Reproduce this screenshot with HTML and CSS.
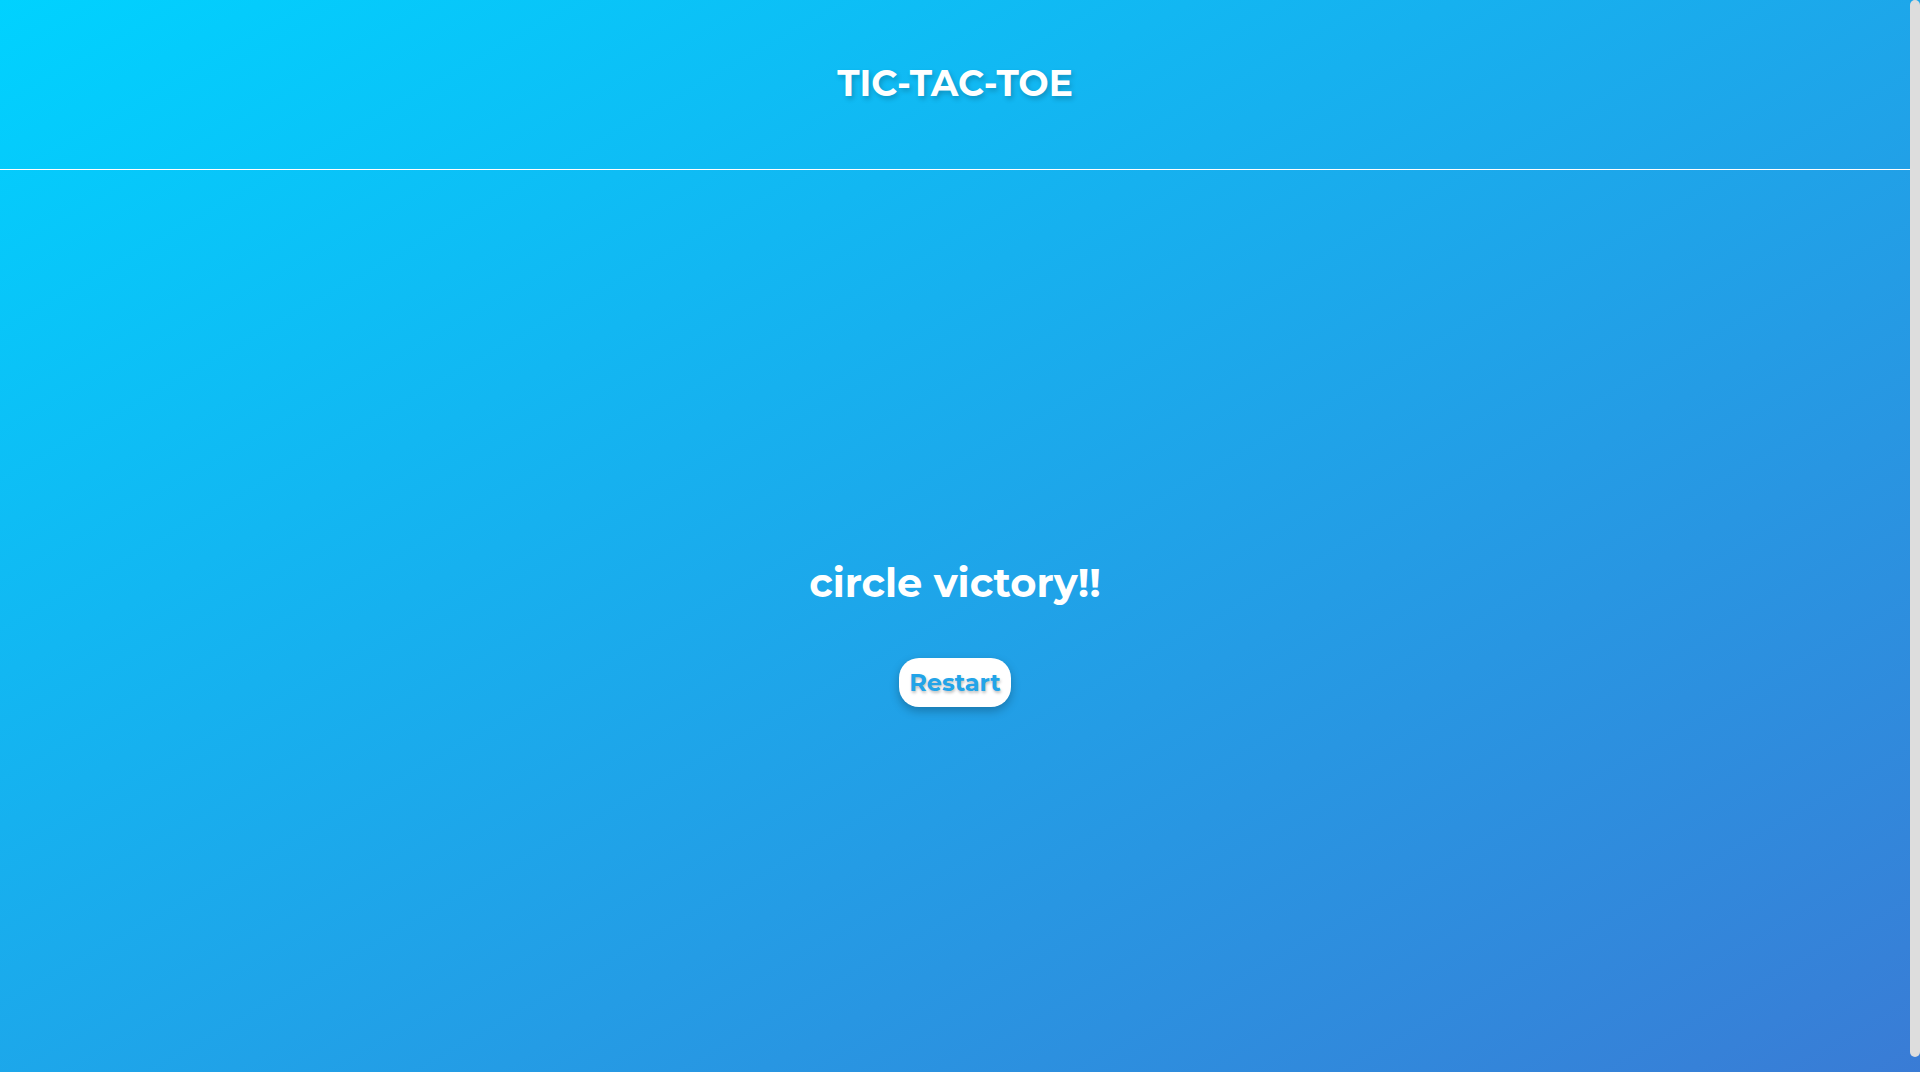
FILE: index.html
```html
<!DOCTYPE html>
<html lang="en">
<head>
<meta charset="utf-8">
<title>Tic-Tac-Toe</title>
<link rel="stylesheet" href="styles.css">
</head>
<body>
  <header class="header">
    <h1 class="title">TIC-TAC-TOE</h1>
  </header>
  <main class="main">
    <div class="result">
      <h2 class="message">circle victory!!</h2>
      <button class="restart" type="button">Restart</button>
    </div>
  </main>
  <div class="scrollbar" aria-hidden="true"><div class="scrollbar-thumb"></div></div>
</body>
</html>
```

FILE: styles.css
```css
html {
  background: linear-gradient(to bottom right, #00d2ff, #3a7bd5);
  min-height: 100%;
  overflow: hidden;
}
body {
  margin: 0 10px 0 0;
  font-family: "Montserrat", "Open Sans", "Liberation Sans", sans-serif;
  color: #fff;
}
.scrollbar {
  position: fixed;
  top: 0;
  right: 0;
  width: 10px;
  height: 100%;
}
.scrollbar-thumb {
  height: 1057px;
  background: #ddd;
  border-radius: 5px;
}
.header {
  height: 169px;
  border-bottom: 1px solid #fff;
  display: flex;
  align-items: center;
  justify-content: center;
}
.title {
  margin: -3px 0 0 0;
  font-size: 36px;
  font-weight: 700;
  text-shadow: 2px 3px 5px rgba(0, 0, 0, 0.2);
}
.main {
  height: 918px;
  display: flex;
  align-items: center;
  justify-content: center;
}
.result {
  display: flex;
  flex-direction: column;
  align-items: center;
  gap: 55px;
  margin-top: 12px;
}
.message {
  margin: 0;
  font-size: 40px;
  font-weight: 700;
  line-height: 1;
}
.restart {
  font-family: inherit;
  font-size: 24px;
  font-weight: 700;
  color: #22a4e8;
  background: #fff;
  border: none;
  border-radius: 20px;
  width: 112px;
  height: 49px;
  padding: 0;
  box-shadow: 0 4px 10px rgba(0, 0, 0, 0.25);
  text-shadow: 1px 2px 3px rgba(0, 0, 0, 0.25);
  cursor: pointer;
}
```
